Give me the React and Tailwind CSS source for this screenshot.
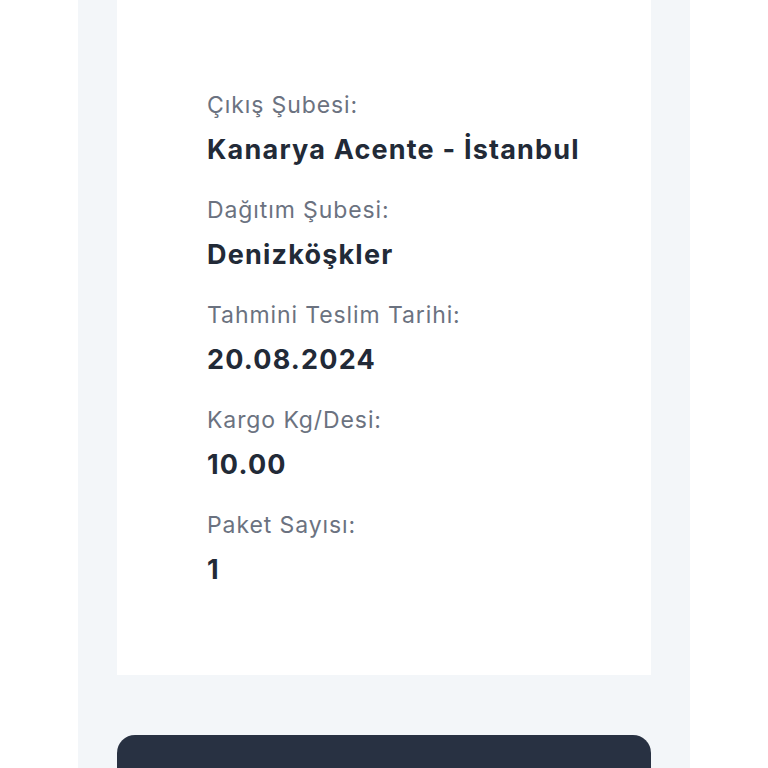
const rows = [
  { label: 'Çıkış Şubesi:', value: 'Kanarya Acente - İstanbul' },
  { label: 'Dağıtım Şubesi:', value: 'Denizköşkler' },
  { label: 'Tahmini Teslim Tarihi:', value: '20.08.2024' },
  { label: 'Kargo Kg/Desi:', value: '10.00' },
  { label: 'Paket Sayısı:', value: '1' },
];

export default function App() {
  return (
    <div className="w-[768px] h-[768px] overflow-hidden bg-white font-['Inter','Noto_Sans',sans-serif]">
      <div className="ml-[78px] w-[612px] h-full bg-[#f3f6f9] px-[39px]">
        <div className="bg-white pl-[90px] pr-[40px] pt-[90px] pb-[87px] flex flex-col gap-[27px]">
          {rows.map((r) => (
            <div key={r.label} className="flex flex-col gap-[12px] whitespace-nowrap">
              <div className="text-[23px] leading-[30px] tracking-[0.9px] text-[#6b7280]">{r.label}</div>
              <div className="text-[27px] leading-[36px] tracking-[1.2px] font-bold text-[#222a37]">{r.value}</div>
            </div>
          ))}
        </div>
        <button className="mt-[60px] w-full h-[80px] rounded-t-[18px] bg-[#283142]" />
      </div>
    </div>
  );
}
